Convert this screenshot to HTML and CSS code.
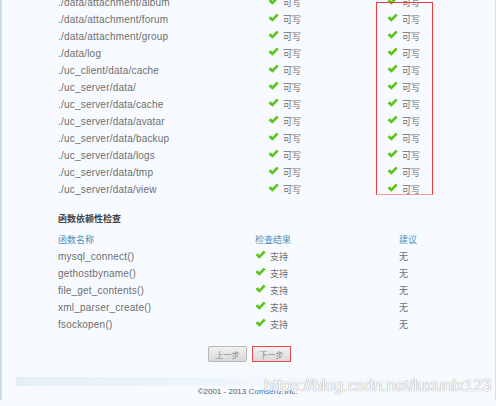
FILE: index.html
```html
<!DOCTYPE html>
<html>
<head>
<meta charset="utf-8">
<link rel="stylesheet" href="styles.css">
</head>
<body>
<div class="page">
  <div class="dirs">
    <div class="row"><span class="path">./data/attachment/album</span><span class="st"><svg class="ok" viewBox="0 0 11 10"><path d="M0.5 5.2 L2.6 3.2 L4.4 5 L8.8 0.6 L10.6 2.4 L4.4 8.8 Z"/></svg>可写</span><span class="st"><svg class="ok" viewBox="0 0 11 10"><path d="M0.5 5.2 L2.6 3.2 L4.4 5 L8.8 0.6 L10.6 2.4 L4.4 8.8 Z"/></svg>可写</span></div>
    <div class="row"><span class="path">./data/attachment/forum</span><span class="st"><svg class="ok" viewBox="0 0 11 10"><path d="M0.5 5.2 L2.6 3.2 L4.4 5 L8.8 0.6 L10.6 2.4 L4.4 8.8 Z"/></svg>可写</span><span class="st"><svg class="ok" viewBox="0 0 11 10"><path d="M0.5 5.2 L2.6 3.2 L4.4 5 L8.8 0.6 L10.6 2.4 L4.4 8.8 Z"/></svg>可写</span></div>
    <div class="row"><span class="path">./data/attachment/group</span><span class="st"><svg class="ok" viewBox="0 0 11 10"><path d="M0.5 5.2 L2.6 3.2 L4.4 5 L8.8 0.6 L10.6 2.4 L4.4 8.8 Z"/></svg>可写</span><span class="st"><svg class="ok" viewBox="0 0 11 10"><path d="M0.5 5.2 L2.6 3.2 L4.4 5 L8.8 0.6 L10.6 2.4 L4.4 8.8 Z"/></svg>可写</span></div>
    <div class="row"><span class="path">./data/log</span><span class="st"><svg class="ok" viewBox="0 0 11 10"><path d="M0.5 5.2 L2.6 3.2 L4.4 5 L8.8 0.6 L10.6 2.4 L4.4 8.8 Z"/></svg>可写</span><span class="st"><svg class="ok" viewBox="0 0 11 10"><path d="M0.5 5.2 L2.6 3.2 L4.4 5 L8.8 0.6 L10.6 2.4 L4.4 8.8 Z"/></svg>可写</span></div>
    <div class="row"><span class="path">./uc_client/data/cache</span><span class="st"><svg class="ok" viewBox="0 0 11 10"><path d="M0.5 5.2 L2.6 3.2 L4.4 5 L8.8 0.6 L10.6 2.4 L4.4 8.8 Z"/></svg>可写</span><span class="st"><svg class="ok" viewBox="0 0 11 10"><path d="M0.5 5.2 L2.6 3.2 L4.4 5 L8.8 0.6 L10.6 2.4 L4.4 8.8 Z"/></svg>可写</span></div>
    <div class="row"><span class="path">./uc_server/data/</span><span class="st"><svg class="ok" viewBox="0 0 11 10"><path d="M0.5 5.2 L2.6 3.2 L4.4 5 L8.8 0.6 L10.6 2.4 L4.4 8.8 Z"/></svg>可写</span><span class="st"><svg class="ok" viewBox="0 0 11 10"><path d="M0.5 5.2 L2.6 3.2 L4.4 5 L8.8 0.6 L10.6 2.4 L4.4 8.8 Z"/></svg>可写</span></div>
    <div class="row"><span class="path">./uc_server/data/cache</span><span class="st"><svg class="ok" viewBox="0 0 11 10"><path d="M0.5 5.2 L2.6 3.2 L4.4 5 L8.8 0.6 L10.6 2.4 L4.4 8.8 Z"/></svg>可写</span><span class="st"><svg class="ok" viewBox="0 0 11 10"><path d="M0.5 5.2 L2.6 3.2 L4.4 5 L8.8 0.6 L10.6 2.4 L4.4 8.8 Z"/></svg>可写</span></div>
    <div class="row"><span class="path">./uc_server/data/avatar</span><span class="st"><svg class="ok" viewBox="0 0 11 10"><path d="M0.5 5.2 L2.6 3.2 L4.4 5 L8.8 0.6 L10.6 2.4 L4.4 8.8 Z"/></svg>可写</span><span class="st"><svg class="ok" viewBox="0 0 11 10"><path d="M0.5 5.2 L2.6 3.2 L4.4 5 L8.8 0.6 L10.6 2.4 L4.4 8.8 Z"/></svg>可写</span></div>
    <div class="row"><span class="path">./uc_server/data/backup</span><span class="st"><svg class="ok" viewBox="0 0 11 10"><path d="M0.5 5.2 L2.6 3.2 L4.4 5 L8.8 0.6 L10.6 2.4 L4.4 8.8 Z"/></svg>可写</span><span class="st"><svg class="ok" viewBox="0 0 11 10"><path d="M0.5 5.2 L2.6 3.2 L4.4 5 L8.8 0.6 L10.6 2.4 L4.4 8.8 Z"/></svg>可写</span></div>
    <div class="row"><span class="path">./uc_server/data/logs</span><span class="st"><svg class="ok" viewBox="0 0 11 10"><path d="M0.5 5.2 L2.6 3.2 L4.4 5 L8.8 0.6 L10.6 2.4 L4.4 8.8 Z"/></svg>可写</span><span class="st"><svg class="ok" viewBox="0 0 11 10"><path d="M0.5 5.2 L2.6 3.2 L4.4 5 L8.8 0.6 L10.6 2.4 L4.4 8.8 Z"/></svg>可写</span></div>
    <div class="row"><span class="path">./uc_server/data/tmp</span><span class="st"><svg class="ok" viewBox="0 0 11 10"><path d="M0.5 5.2 L2.6 3.2 L4.4 5 L8.8 0.6 L10.6 2.4 L4.4 8.8 Z"/></svg>可写</span><span class="st"><svg class="ok" viewBox="0 0 11 10"><path d="M0.5 5.2 L2.6 3.2 L4.4 5 L8.8 0.6 L10.6 2.4 L4.4 8.8 Z"/></svg>可写</span></div>
    <div class="row"><span class="path">./uc_server/data/view</span><span class="st"><svg class="ok" viewBox="0 0 11 10"><path d="M0.5 5.2 L2.6 3.2 L4.4 5 L8.8 0.6 L10.6 2.4 L4.4 8.8 Z"/></svg>可写</span><span class="st"><svg class="ok" viewBox="0 0 11 10"><path d="M0.5 5.2 L2.6 3.2 L4.4 5 L8.8 0.6 L10.6 2.4 L4.4 8.8 Z"/></svg>可写</span></div>
    <div class="mark"></div>
  </div>

  <div class="section-title">函数依赖性检查</div>
  <div class="funcs">
    <div class="row head"><span>函数名称</span><span>检查结果</span><span>建议</span></div>
    <div class="row"><span class="path">mysql_connect()</span><span class="st"><svg class="ok" viewBox="0 0 11 10"><path d="M0.5 5.2 L2.6 3.2 L4.4 5 L8.8 0.6 L10.6 2.4 L4.4 8.8 Z"/></svg>支持</span><span>无</span></div>
    <div class="row"><span class="path">gethostbyname()</span><span class="st"><svg class="ok" viewBox="0 0 11 10"><path d="M0.5 5.2 L2.6 3.2 L4.4 5 L8.8 0.6 L10.6 2.4 L4.4 8.8 Z"/></svg>支持</span><span>无</span></div>
    <div class="row"><span class="path">file_get_contents()</span><span class="st"><svg class="ok" viewBox="0 0 11 10"><path d="M0.5 5.2 L2.6 3.2 L4.4 5 L8.8 0.6 L10.6 2.4 L4.4 8.8 Z"/></svg>支持</span><span>无</span></div>
    <div class="row"><span class="path">xml_parser_create()</span><span class="st"><svg class="ok" viewBox="0 0 11 10"><path d="M0.5 5.2 L2.6 3.2 L4.4 5 L8.8 0.6 L10.6 2.4 L4.4 8.8 Z"/></svg>支持</span><span>无</span></div>
    <div class="row"><span class="path">fsockopen()</span><span class="st"><svg class="ok" viewBox="0 0 11 10"><path d="M0.5 5.2 L2.6 3.2 L4.4 5 L8.8 0.6 L10.6 2.4 L4.4 8.8 Z"/></svg>支持</span><span>无</span></div>
  </div>

  <div class="buttons">
    <button class="btn">上一步</button>
    <button class="btn next">下一步</button>
  </div>

  <div class="footer">
    <div class="band"></div>
    <div class="copy">©2001 - 2013 <a class="brand">Comsenz</a> Inc.</div>
    <div class="watermark">https://blog.csdn.net/luxunlx123</div>
  </div>
</div>
</body>
</html>
```

FILE: styles.css
```css
html, body {
  margin: 0;
  padding: 0;
  background: #f7fbff;
}
body {
  width: 496px;
  height: 406px;
  overflow: hidden;
  font-family: "Liberation Sans", Arial, "Noto Sans CJK SC", sans-serif;
  font-size: 9px;
  color: #6e6e6e;
}
.page {
  position: relative;
  height: 406px;
  box-sizing: border-box;
  border-left: 2px solid #c8dde8;
  border-right: 1px solid #d6e4ec;
  background: #f7fbff;
}
.dirs {
  position: relative;
  margin-top: -6px;
}
.row {
  display: grid;
  height: 17px;
  align-items: center;
  padding-left: 56px;
}
.path {
  font-size: 10px;
  letter-spacing: 0.2px;
}
.dirs .row {
  grid-template-columns: 210px 119px 1fr;
}
.funcs .row {
  grid-template-columns: 197px 144px 1fr;
}
.st {
  display: flex;
  align-items: center;
  gap: 4px;
}
.ok {
  width: 11px;
  height: 10px;
  margin-top: -3px;
  fill: #5cc51c;
}
.mark {
  position: absolute;
  left: 374px;
  top: 8px;
  width: 57px;
  height: 193px;
  border: 1px solid #ef3b3b;
  border-bottom-color: #f39a9a;
  box-sizing: border-box;
}
.section-title {
  height: 17px;
  line-height: 17px;
  margin-top: 13px;
  padding-left: 56px;
  font-weight: bold;
  color: #444;
}
.funcs {
  margin-top: 3px;
}
.head {
  color: #4a90b8;
}
.buttons {
  display: flex;
  justify-content: center;
  gap: 5px;
  margin-top: 13px;
  padding-left: 2px;
}
.btn {
  width: 39px;
  height: 16px;
  padding: 0;
  font-family: "Noto Sans CJK SC", sans-serif;
  font-size: 8px;
  color: #888;
  background: linear-gradient(#f2f2f2, #d8d8d8);
  border: 1px solid #b8b8b8;
  border-radius: 2px;
}
.btn.next {
  border-color: #e84848;
  border-radius: 0;
}
.footer {
  position: relative;
  margin-top: 15px;
}
.band {
  margin-left: 14px;
  margin-right: 8px;
  height: 9px;
  background: linear-gradient(90deg, #e3eff8, #f3f8fc 60%, #f7fbff);
}
.copy {
  text-align: center;
  line-height: 12px;
  color: #555;
  font-size: 8px;
  padding-right: 2px;
}
.brand {
  color: #3a74c0;
}
.watermark {
  position: absolute;
  left: 262px;
  top: 0px;
  font-size: 16px;
  color: #ffffff;
  letter-spacing: 0.1px;
  text-shadow: 0 0 1px #999, 0 0 1px #aaa;
  white-space: nowrap;
}
```
